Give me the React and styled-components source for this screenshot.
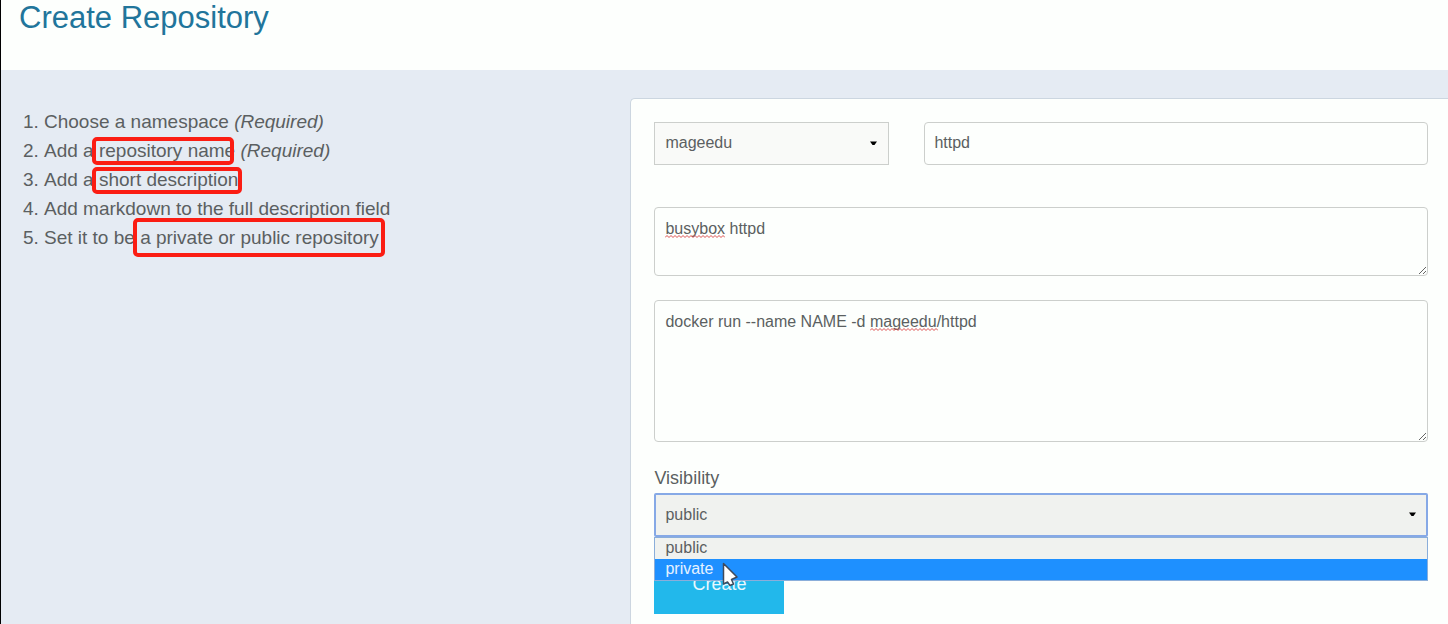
import React from "react";
import styled, { createGlobalStyle } from "styled-components";

const GlobalStyle = createGlobalStyle`
  *, *::before, *::after { box-sizing: border-box; }
  body {
    margin: 0;
    background: #fdfffd;
    color: #5b5f61;
    font-family: "Liberation Sans", Arial, sans-serif;
    font-size: 16px;
  }
`;

const Page = styled.div`
  display: flex;
  flex-direction: column;
  min-height: 100vh;
  border-left: 1px solid #000;
`;

const Header = styled.header`
  height: 70px;
  padding: 0 18px;
`;

const Title = styled.h1`
  margin: 0;
  font-size: 31px;
  font-weight: 400;
  line-height: 36px;
  color: #21759b;
`;

const Main = styled.main`
  flex: 1;
  display: flex;
  padding-top: 28px;
  background: #e5ebf3;
`;

const Guide = styled.section`
  flex: 0 0 43.5%;
  padding-top: 9px;
`;

const Steps = styled.ol`
  margin: 0;
  padding: 0 0 0 43px;
  font-size: 19px;
  line-height: 29px;
`;

const Marked = styled.span`
  position: relative;
  display: inline-block;

  &::after {
    content: "";
    position: absolute;
    inset: ${(p) => p.$inset};
    border: 4px solid #fb1d13;
    border-radius: 5px;
  }
`;

const Panel = styled.form`
  flex: 1;
  min-width: 0;
  display: flex;
  flex-direction: column;
  padding: 23px 20px 10px 23px;
  background: #fdfffd;
  border: solid #ccd6e0;
  border-width: 1px 0 0 1px;
  border-radius: 5px 0 0 0;
`;

const NameRow = styled.div`
  display: grid;
  grid-template-columns: 7fr 15fr;
  gap: 35px;
  margin-bottom: 42px;
`;

const Field = styled.div`
  position: relative;
  display: flex;
  margin-bottom: ${(p) => p.$gap || 0}px;
`;

const controlText = `
  width: 100%;
  margin: 0;
  color: #5b5f61;
  font-family: inherit;
  font-size: 16px;
  outline: none;
`;

const TextInput = styled.input`
  ${controlText}
  height: 43px;
  padding: 0 9px 2px;
  background: #fdfffd;
  border: 1px solid #cccfcc;
  border-radius: 4px;
`;

const TextArea = styled.textarea`
  ${controlText}
  height: ${(p) => p.$height}px;
  padding: 11px 10px;
  line-height: 20px;
  background: #fdfffd;
  border: 1px solid #cccfcc;
  border-radius: 4px;
  resize: vertical;
`;

const Select = styled.select`
  ${controlText}
  appearance: none;
  height: ${(p) => (p.$open ? 44 : 43)}px;
  padding: ${(p) => (p.$open ? "0 9px 2px" : "0 10px 2px")};
  background: ${(p) => (p.$open ? "#f0f2ef" : "#f9faf8")};
  border: ${(p) => (p.$open ? "2px solid #86a9e6" : "1px solid #cccfcc")};
  border-radius: ${(p) => (p.$open ? 2 : 0)}px;
`;

const CaretIcon = styled.svg`
  position: absolute;
  top: 19px;
  right: 12px;
  width: 7px;
  height: 5px;
  pointer-events: none;
`;

const SquiggleIcon = styled.svg`
  position: absolute;
  top: 28px;
  left: ${(p) => p.$left}px;
  width: ${(p) => p.$width}px;
  height: 3px;
  pointer-events: none;
`;

const Label = styled.label`
  margin-bottom: 3px;
  font-size: 18px;
  line-height: 24px;
`;

const Options = styled.ul`
  position: absolute;
  top: 100%;
  left: 0;
  right: 0;
  z-index: 1;
  margin: 0;
  padding: 0;
  list-style: none;
  border: 1px solid #8aaeda;
  background: #f0f2ef;
`;

const Option = styled.li`
  height: 21px;
  padding: 0 10px;
  line-height: 19px;
  color: ${(p) => (p.$active ? "#e6f2ff" : "inherit")};
  background: ${(p) => (p.$active ? "#1e90ff" : "transparent")};
`;

const Pointer = styled.svg`
  position: absolute;
  z-index: 2;
  top: 69px;
  left: 68px;
  width: 16px;
  height: 25px;
  pointer-events: none;
`;

const CreateButton = styled.button`
  width: 130px;
  height: 60px;
  padding: 0;
  border: 0;
  background: #22b8eb;
  color: #e8f8ff;
  font-family: inherit;
  font-size: 18px;
`;

function Caret() {
  return (
    <CaretIcon viewBox="0 0 7 5" aria-hidden="true">
      <path d="M0 .5h7L4.5 4h-2z" fill="#000" />
    </CaretIcon>
  );
}

function Squiggle({ left, width }) {
  let d = "M0 2.5";
  for (let x = 2; x <= width; x += 2) {
    d += `L${x} ${x % 4 === 2 ? 0.5 : 2.5}`;
  }
  return (
    <SquiggleIcon $left={left} $width={width} viewBox={`0 0 ${width} 3`} aria-hidden="true">
      <path d={d} fill="none" stroke="#dc5050" />
    </SquiggleIcon>
  );
}

export default function App() {
  return (
    <>
      <GlobalStyle />
      <Page>
        <Header>
          <Title>Create Repository</Title>
        </Header>
        <Main>
          <Guide>
            <Steps>
              <li>Choose a namespace <em>(Required)</em></li>
              <li>
                Add a <Marked $inset="1px 1px 0 -7px">repository name</Marked> <em>(Required)</em>
              </li>
              <li>
                Add a <Marked $inset="2px -4px 0 -7px">short description</Marked>
              </li>
              <li>Add markdown to the full description field</li>
              <li>
                Set it to be <Marked $inset="-5px -6px -5px -7px">a private or public repository</Marked>
              </li>
            </Steps>
          </Guide>
          <Panel onSubmit={(e) => e.preventDefault()}>
            <NameRow>
              <Field>
                <Select aria-label="Namespace" defaultValue="mageedu">
                  <option value="mageedu">mageedu</option>
                </Select>
                <Caret />
              </Field>
              <Field>
                <TextInput aria-label="Repository name" type="text" defaultValue="httpd" />
              </Field>
            </NameRow>
            <Field $gap={24}>
              <TextArea aria-label="Short description" $height={69} defaultValue="busybox httpd" />
              <Squiggle left={11} width={60} />
            </Field>
            <Field $gap={24}>
              <TextArea
                aria-label="Full description"
                $height={142}
                defaultValue="docker run --name NAME -d mageedu/httpd"
              />
              <Squiggle left={216} width={68} />
            </Field>
            <Label htmlFor="visibility">Visibility</Label>
            <Field $gap={17}>
              <Select id="visibility" $open defaultValue="public">
                <option value="public">public</option>
                <option value="private">private</option>
              </Select>
              <Caret />
              <Options role="listbox" aria-label="Visibility">
                <Option role="option" aria-selected="false">public</Option>
                <Option role="option" aria-selected="true" $active>private</Option>
              </Options>
              <Pointer viewBox="0 0 16 25" aria-hidden="true">
                <path
                  d="M1.5 1.5V22l4-2 2.500 3.500 3.500-1.500-2-4.500 5.500-2.500z"
                  fill="#fff"
                  stroke="#3f4a5c"
                  strokeWidth="1.500"
                  strokeLinejoin="round"
                />
              </Pointer>
            </Field>
            <CreateButton type="submit">Create</CreateButton>
          </Panel>
        </Main>
      </Page>
    </>
  );
}
